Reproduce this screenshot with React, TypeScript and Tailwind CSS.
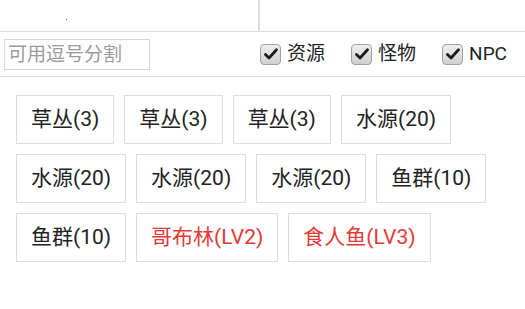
const tags: { label: string; red?: boolean }[] = [
  { label: '草丛(3)' },
  { label: '草丛(3)' },
  { label: '草丛(3)' },
  { label: '水源(20)' },
  { label: '水源(20)' },
  { label: '水源(20)' },
  { label: '水源(20)' },
  { label: '鱼群(10)' },
  { label: '鱼群(10)' },
  { label: '哥布林(LV2)', red: true },
  { label: '食人鱼(LV3)', red: true },
];

const CheckBox = ({ label }: { label: string }) => (
  <label className="flex items-center gap-[6px]">
    <span className="flex h-[21px] w-[21px] items-center justify-center rounded-[4px] border border-[#a0a0a0] bg-gradient-to-b from-[#efefef] to-[#cfcfcf]">
      <svg width="14" height="12" viewBox="0 0 14 12">
        <path d="M1.5 6.5 L5 10 L12.5 1.8" fill="none" stroke="#1a1a1a" strokeWidth="2.8" strokeLinecap="round" strokeLinejoin="round" />
      </svg>
    </span>
    <span className="text-[19px] text-[#222]">{label}</span>
  </label>
);

const App = () => {
  return (
    <div className="h-[309px] w-[525px] bg-white font-['Roboto','Noto_Sans_CJK_SC',sans-serif]">
      <div className="flex h-[32px] border-b border-[#dcdcdc]">
        <div className="relative w-[260px] border-r-2 border-[#dcdcdc]">
          <span className="absolute left-[66px] top-[19px] h-px w-px bg-[#555]" />
        </div>
        <div className="flex-1" />
      </div>
      <div className="flex h-[45px] items-center border-b border-[#dcdcdc] pl-[4px] pr-[18px]">
        <input
          type="text"
          placeholder="可用逗号分割"
          className="h-[31px] w-[146px] border border-[#d6d6d6] px-[3px] text-[19px] text-[#333] outline-none placeholder:text-[#9a9a9a]"
        />
        <div className="ml-auto flex items-center gap-[26px]">
          <CheckBox label="资源" />
          <CheckBox label="怪物" />
          <CheckBox label="NPC" />
        </div>
      </div>
      <div className="flex flex-wrap gap-[10px] pl-[16px] pr-[30px] pt-[18px]">
        {tags.map((t, i) => (
          <button
            key={i}
            className={`flex h-[49px] items-center border border-[#dedede] px-[14px] text-[21px] ${t.red ? 'text-[#e53935]' : 'text-[#222]'}`}
          >
            {t.label}
          </button>
        ))}
      </div>
    </div>
  );
};

export default App;
